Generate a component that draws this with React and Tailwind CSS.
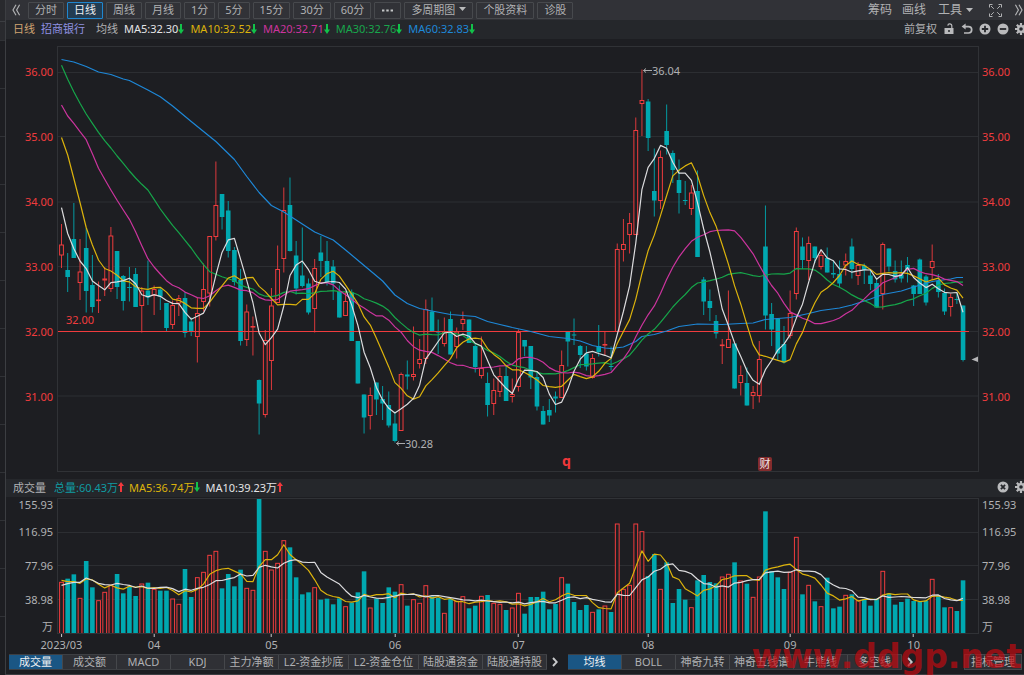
import React from "react";

const STEP = 6.175;
const FIRST = 61.5;
const LEFT = 57;
const WIDTH = 922;
const xAt = (i) => FIRST + STEP * i;
const pct = (x) => `${((x - LEFT) / WIDTH) * 100}%`;

// direction, high, body top, body bottom, low (chart units)
const CANDLES = `u 224 245 255 268|d 253 270 277 292|d 203 239 258 258|u 239 272 282.5 300|d 228 248 291 312.5|d 255 285 307 312.5|u 281.5 300 300 313|u 267 279 280 296|u 227 236 288.5 292|d 251 251 287 299|d 275 276 301 310.5|d 267 287 288 301.5|d 268 274 307 307|u 287 291 305.5 332.5|d 260.5 290.5 297.5 305|u 285.5 289.5 295.5 315|d 288 289.5 296.5 310|d 303 303 328 331|u 300.5 305.5 324.5 329|u 295 298.5 303 316|d 292 298 333 337.5|d 317.5 321.5 331 336|u 297.5 313.5 336.5 362.5|u 263.5 289.5 301.5 311.5|u 236 236.5 293 306.5|u 161.5 205.5 236.5 240.5|d 194 194 217 229.5|d 201 210.5 251 257.5|d 247 250 282 285.5|d 269 280 341 345.5|u 304.5 312 339.5 346|u 316.5 326.5 327 355.5|d 379.5 380 403.5 434.5|u 330 340.5 414.5 417.5|u 288 306 360.5 390|u 245.5 269.5 302.5 303|u 187.5 210.5 258.5 272.5|d 177.5 205 251 251.5|d 241 255.5 288.5 294.5|d 227.5 275.5 286 287.5|d 278.5 283.5 312.5 314.5|u 259 268.5 308.5 332.5|d 236 252.5 261 277|d 241 261 282 285.5|d 260 266.5 283.5 300|d 285.5 291 317.5 317.5|u 291.5 301.5 315.5 315.5|d 289.5 292.5 341 341|d 341 341 383.5 383.5|d 394.5 394.5 417.5 433.5|u 387.5 395.5 415.5 429.5|d 382.5 382.5 399.5 415|d 386 399 403.5 420|d 391.5 405 425.5 427.5|d 411.5 423.5 441 442.5|u 372.5 374.5 430.5 430.5|d 360.5 374.5 376.5 389.5|u 326.5 374.5 376.5 380.5|u 339 359.5 363.5 368.5|u 299.5 309.5 358.5 364|d 297.5 311.5 331.5 331.5|d 319.5 331.5 332.5 354|u 317.5 332 343.5 346.5|d 311.5 319 354.5 354.5|u 327.5 332 346.5 358.5|u 311.5 319.5 323.5 330|d 319.5 319.5 343 343|d 344 346 367 372.5|u 336.5 368.5 375.5 378.5|d 372.5 383 405 416.5|u 378.5 390.5 403.5 415|u 367.5 376.5 391.5 397|d 365.5 376 401 401|u 378.5 394.5 396.5 402.5|u 329.5 332.5 386.5 391.5|d 340 340 346.5 356|d 346 346 377.5 389|d 371.5 377 406.5 410.5|d 406 411 424.5 424.5|d 399 410 415.5 422|d 391.5 396.5 398.5 412.5|u 350.5 365.5 397.5 397.5|d 331.5 331.5 341.5 366.5|d 318.5 334.5 335.5 345|d 345 346 355 368|d 346 353.5 366.5 370.5|u 354 358.5 377.5 378.5|d 325 346 352 356.5|u 331.5 344.5 345 355|d 346.5 366 367 370.5|u 243.5 249.5 331.5 331.5|u 219 244.5 249.5 261.5|u 213 223.5 234.5 253.5|u 117.5 130.5 234.5 235|u 69.5 100.5 103.5 136|d 99 101.5 138 151|d 148.5 191 200.5 216.5|u 150.5 157.5 200.5 209|d 104.5 131 145 154.5|d 150.5 153 170 183|d 159.5 180 193 213.5|d 181 200 200.5 205|u 185 193 208.5 215|d 170.5 191 257 257|d 277 279.5 301.5 315|d 289.5 301 308 321|d 315 321 333.5 338.5|u 339 345 345.5 364|u 290.5 339.5 347.5 347.5|d 343.5 343.5 388.5 388.5|u 365.5 375.5 382.5 395.5|d 367.5 383 405.5 405.5|u 386 392.5 395.5 409|u 341 359.5 395.5 402.5|d 205.5 246.5 315.5 329.5|d 303 314 329.5 346|d 318.5 318.5 353.5 360|d 326 344 362.5 363.5|u 290.5 313.5 335.5 338.5|u 227.5 231.5 293.5 299.5|d 237.5 246.5 260 269|u 236.5 243.5 260.5 280|d 246.5 246.5 258 263|u 251 255.5 266.5 269.5|d 247.5 258 272.5 272.5|d 260.5 273 274.5 278|d 260.5 274 283.5 287.5|u 253.5 261.5 265 275.5|d 238.5 246.5 269 278.5|u 262 265.5 275.5 285|d 263.5 265.5 270 284|d 270 275.5 284 290|d 278.5 283 307.5 307.5|u 242.5 244.5 293.5 309.5|d 248.5 248.5 266.5 271.5|d 260.5 271 279.5 282.5|d 260.5 274.5 278.5 282.5|d 257 265 269 282.5|d 285 285.5 294 306|d 258.5 259.5 294 294|d 275 276.5 302.5 305.5|u 244.5 261.5 267.5 280|d 274 281 292 297.5|d 288.5 293 311.5 315|u 293.5 297.5 306.5 316.5|d 293.5 299 300 304|d 305.5 305.5 360 361.5`
  .split("|")
  .map((row) => {
    const [dir, ...n] = row.split(" ");
    const [high, top, bottom, low] = n.map(Number);
    return { up: dir === "u", high, top, bottom, low };
  });

// upper edge of each volume bar, in thirds of a unit below 475
const VOLUMES = [
  322, 311, 298, 370, 258, 337, 377, 352, 331, 297, 355, 334, 363, 327, 323, 343, 347, 347, 372, 388, 282, 366, 308, 292,
  241, 229, 340, 297, 334, 284, 340, 346, 70, 229, 285, 265, 197, 217, 307, 358, 352, 338, 374, 371, 388, 370, 395, 383,
  352, 289, 399, 371, 384, 337, 350, 329, 392, 374, 385, 332, 364, 369, 415, 372, 379, 365, 400, 392, 364, 360, 385, 388,
  405, 399, 355, 416, 366, 366, 350, 403, 387, 308, 326, 381, 405, 390, 412, 403, 393, 411, 147, 343, 331, 147, 170, 303,
  237, 343, 262, 384, 342, 374, 398, 316, 300, 321, 325, 306, 298, 262, 318, 326, 367, 306, 109, 288, 307, 342, 292, 187,
  358, 331, 379, 395, 308, 400, 395, 361, 358, 377, 373, 392, 371, 289, 355, 389, 381, 371, 378, 381, 377, 313, 363, 397,
  398, 408, 316,
].map((v) => 475 + v / 3);

const CLOSES = CANDLES.map((c) => (c.up ? c.top : c.bottom));

function average(values, period, lead) {
  return values.map((_, i) => {
    if (i < lead.length) return lead[i];
    const part = values.slice(i - period + 1, i + 1);
    return part.reduce((a, b) => a + b, 0) / period;
  });
}
const toPoints = (values) => values.map((y, i) => `${xAt(i).toFixed(1)},${y.toFixed(1)}`).join(" ");
const price = (list) => list.map((v) => 40 + v / 3);
const volume = (list) => list.map((v) => 475 + v / 3);

const MA5 = toPoints(average(CLOSES, 5, [207.7, 233.5, 248.5, 261]));
const MA10 = toPoints(average(CLOSES, 10, [137.5, 155, 178.5, 202.5, 227.5, 245, 260, 268.5, 271]));
const MA20 = toPoints(
  average(CLOSES, 20, price([195, 228, 250, 275, 299, 341, 385, 418, 450, 481, 510, 538, 575, 617, 656, 681, 702, 722, 736]))
);
const MA30 = toPoints(
  average(
    CLOSES,
    30,
    price([
      76, 118, 155, 190, 222, 250, 277, 302, 324, 348, 370, 393, 414, 433, 450, 478, 507, 532, 556, 578, 601, 624, 650, 674,
      695, 703, 710, 716, 722,
    ])
  )
);
const MA60 = [
  [0, 59.5], [2, 62], [4, 66.5], [6, 72], [8, 74.5], [10, 79], [11, 80.5], [14, 90], [16, 96.7], [18, 106], [21, 121.5],
  [25, 141.5], [28, 159.5], [30, 176.5], [32, 192.5], [34, 205.5], [36, 212], [39, 224], [41, 232], [44, 240], [46, 250],
  [49, 265.5], [52, 281], [54, 295], [56, 303.5], [58, 308.5], [60, 311], [63, 314.5], [67, 316.5], [69, 321.5],
  [71, 324.5], [73, 327.5], [76, 331.5], [79, 336.5], [82, 338.5], [84, 341], [86, 345.5], [88, 348], [89, 348.5],
  [91, 347], [93, 341.5], [94, 336.5], [96, 334.5], [98, 331], [100, 326.5], [103, 324], [107, 324.5], [110, 323.5],
  [112, 323], [114, 319.5], [116, 318.5], [118, 317.5], [121, 313.5], [123, 310.5], [126, 308], [128, 305], [131, 299],
  [133, 294.5], [136, 291], [138, 287], [141, 281.5], [142, 280.5], [144, 279], [145, 277.5], [146, 277.5],
]
  .map(([i, y]) => `${xAt(i).toFixed(1)},${y}`)
  .join(" ");
const VMA5 = toPoints(average(VOLUMES, 5, volume([316, 320, 320, 325])));
const VMA10 = toPoints(average(VOLUMES, 10, volume([331, 326, 322, 322, 309, 316, 325, 329, 330])));

const RED = "#f03c3e";
const TEAL = "#00a8b0";

function Bar({ x, top, bottom, up }) {
  return up ? (
    <rect x={x - 1.9} y={top} width={3.8} height={Math.max(bottom - top, 0.6)} fill="#1d1e22" stroke={RED} />
  ) : (
    <rect x={x - 2.3} y={top} width={4.6} height={Math.max(bottom - top, 1)} fill={TEAL} />
  );
}

function Line({ points, color }) {
  return <polyline points={points} fill="none" stroke={color} strokeWidth="1.2" strokeLinejoin="round" />;
}

function PriceChart() {
  return (
    <svg className="block h-full w-full" viewBox="57 46 922 426" preserveAspectRatio="none" role="img" aria-label="日线">
      {[72.5, 136.5, 202, 266.5, 331.5, 396].map((y) => (
        <line key={y} x1="57" x2="979" y1={y} y2={y} stroke="#2c2e32" />
      ))}
      {CANDLES.map((c, i) => (
        <g key={i}>
          <line x1={xAt(i)} x2={xAt(i)} y1={c.high} y2={c.low} stroke={c.up ? RED : TEAL} strokeWidth="0.9" />
          <Bar x={xAt(i)} top={c.top} bottom={c.bottom} up={c.up} />
        </g>
      ))}
      <line x1="57" x2="969" y1="331.5" y2="331.5" stroke={RED} />
      <Line points={MA60} color="#1e88d8" />
      <Line points={MA30} color="#16a64a" />
      <Line points={MA20} color="#cc349e" />
      <Line points={MA10} color="#dcb30c" />
      <Line points={MA5} color="#dcdcde" />
      <path d="M971.5 359.5L978 356.5V362Z" fill="#b5b5b7" />
    </svg>
  );
}

function VolumeChart() {
  return (
    <svg className="block h-full w-full" viewBox="57 498 922 136" preserveAspectRatio="none" role="img" aria-label="成交量">
      {[532.5, 565.5, 599.5].map((y) => (
        <line key={y} x1="57" x2="979" y1={y} y2={y} stroke="#2c2e32" />
      ))}
      {VOLUMES.map((y, i) => (
        <Bar key={i} x={xAt(i)} top={y} bottom={CANDLES[i].up ? 633.5 : 634} up={CANDLES[i].up} />
      ))}
      <Line points={VMA5} color="#dcb30c" />
      <Line points={VMA10} color="#dcdcde" />
    </svg>
  );
}

function Trend({ up }) {
  return (
    <svg className="h-[10px] w-[6px] shrink-0" viewBox="0 0 6 10" aria-hidden="true">
      {up ? <path d="M3 0L6 4H4V10H2V4H0Z" fill="#f2383c" /> : <path d="M3 10L6 5.6H4V0H2V5.6H0Z" fill="#12c24a" />}
    </svg>
  );
}

function Reading({ color, text, up }) {
  return (
    <span className={`flex items-center ${color}`}>
      {text}
      <Trend up={up} />
    </span>
  );
}

function Gear() {
  return (
    <svg className="block h-3 w-3" viewBox="0 0 12 12" aria-hidden="true">
      <g stroke="#b9babc" strokeWidth="2.2">
        <path d="M6 0V12M0 6H12M1.8 1.8L10.2 10.2M10.2 1.8L1.8 10.2" />
      </g>
      <circle cx="6" cy="6" r="4" fill="#b9babc" />
      <circle cx="6" cy="6" r="1.8" fill="#25272b" />
    </svg>
  );
}

function Disc({ d }) {
  return (
    <svg className="block h-3 w-3" viewBox="0 0 12 12" aria-hidden="true">
      <circle cx="6" cy="6" r="5.5" fill="#b9babc" />
      <path d={d} stroke="#25272b" strokeWidth="1.8" />
    </svg>
  );
}

function Caret() {
  return (
    <svg className="h-1 w-[7px] shrink-0" viewBox="0 0 7 4" aria-hidden="true">
      <path d="M0 0H7L3.5 4Z" fill="#b9babc" />
    </svg>
  );
}

function Chevrons({ left }) {
  return (
    <svg className="block h-3 w-[9px]" viewBox="0 0 9 12" aria-hidden="true">
      <path
        d={left ? "M4 0.8L1 6L4 11.2M7.6 0.8L4.6 6L7.6 11.2" : "M1.4 0.8L4.4 6L1.4 11.2M5 0.8L8 6L5 11.2"}
        fill="none"
        stroke="#b0b1b3"
        strokeWidth="1.2"
      />
    </svg>
  );
}

const PERIODS = ["分时", "日线", "周线", "月线", "1分", "5分", "15分", "30分", "60分"];
const box = "flex h-[17px] items-center rounded-[1px] border border-[#47494d] px-1.5 pb-0.5";

function Toolbar() {
  return (
    <div className="flex h-5 items-center overflow-hidden bg-[#313237] whitespace-nowrap">
      <button className="mr-[7px] ml-[6px] shrink-0" aria-label="后退">
        <Chevrons left />
      </button>
      <div className="flex gap-[3px]">
        {PERIODS.map((p) => (
          <button
            key={p}
            className={
              p === "日线"
                ? "flex h-[17px] items-center rounded-[1px] border border-[#1f86cf] bg-[#223c52] px-1.5 pb-0.5 text-[#f0f0f2]"
                : box
            }
          >
            {p}
          </button>
        ))}
        <button className="flex h-[17px] w-[27px] items-center justify-center rounded-[1px] border border-[#47494d]" aria-label="更多周期">
          <svg className="h-[3px] w-[11px]" viewBox="0 0 11 3" aria-hidden="true">
            <path d="M0 0.4H2.4V2.6H0ZM4.3 0.4H6.7V2.6H4.3ZM8.6 0.4H11V2.6H8.6Z" fill="#c4c5c7" />
          </svg>
        </button>
        <label className={box}>
          <select aria-label="多周期图" className="w-12 appearance-none bg-transparent text-[11px] leading-[15px] outline-none">
            <option>多周期图</option>
          </select>
          <Caret />
        </label>
        <button className={box}>个股资料</button>
        <button className={box}>诊股</button>
      </div>
      <div className="mr-px ml-auto flex shrink-0 items-center text-xs leading-4">
        <button className="mr-[10px]">筹码</button>
        <button className="mr-3">画线</button>
        <button className="mr-4 flex items-center gap-1">
          工具
          <Caret />
        </button>
        <button className="mr-3" aria-label="全屏">
          <svg className="block h-[13px] w-[13px]" viewBox="0 0 13 13" fill="none" stroke="#b0b1b3" aria-hidden="true">
            <path d="M0.5 3.5V0.5H3.5M2 2L4.8 4.8M9.5 0.5H12.5V3.5M11 2L8.2 4.8M0.5 9.5V12.5H3.5M2 11L4.8 8.2M9.5 12.5H12.5V9.5M11 11L8.2 8.2" />
          </svg>
        </button>
        <button aria-label="前进">
          <Chevrons />
        </button>
      </div>
    </div>
  );
}

function InfoBar() {
  return (
    <div className="flex h-[19px] items-center overflow-hidden bg-[#25272b] pb-0.5 pl-[7px] whitespace-nowrap">
      <span className="text-[#d0a472]">日线</span>
      <span className="ml-1.5 text-[#8f91e2]">招商银行</span>
      <span className="ml-[11px]">均线</span>
      <div className="ml-1.5 flex gap-1.5">
        <Reading color="text-[#e4e4e6]" text="MA5:32.30" />
        <Reading color="text-[#dcb30c]" text="MA10:32.52" />
        <Reading color="text-[#cc349e]" text="MA20:32.71" />
        <Reading color="text-[#18a64c]" text="MA30:32.76" />
        <Reading color="text-[#1e88d8]" text="MA60:32.83" />
      </div>
      <div className="-mr-[3px] ml-auto flex shrink-0 items-center gap-[6px]">
        <button>前复权</button>
        <button aria-label="锁定">
          <svg className="block h-3 w-3" viewBox="0 0 12 12" aria-hidden="true">
            <path d="M1.5 5H10.5V11H1.5Z" fill="#b9babc" />
            <path d="M8.8 5V3A2 2 0 0 0 4.8 2.6" fill="none" stroke="#b9babc" strokeWidth="1.2" />
            <circle cx="6" cy="8" r="1" fill="#25272b" />
          </svg>
        </button>
        <button aria-label="撤销">
          <svg className="block h-3 w-3" viewBox="0 0 12 12" aria-hidden="true">
            <path d="M3 3.6H7.5A3.2 3.2 0 0 1 7.5 10H3" fill="none" stroke="#b9babc" strokeWidth="1.7" />
            <path d="M0.6 3.6L4.6 0.6V6.6Z" fill="#b9babc" />
          </svg>
        </button>
        <button aria-label="放大">
          <Disc d="M6 2.8V9.2M2.8 6H9.2" />
        </button>
        <button aria-label="缩小">
          <Disc d="M2.8 6H9.2" />
        </button>
        <button aria-label="设置">
          <Gear />
        </button>
      </div>
    </div>
  );
}

const PRICES = ["36.00", "35.00", "34.00", "33.00", "32.00", "31.00"];

function PriceAxis({ side }) {
  return (
    <div className={side === "left" ? "w-[51px] shrink-0 pr-1 text-right" : "w-[45px] shrink-0 pl-[3px]"}>
      {PRICES.map((p) => (
        <div key={p} className="h-[65px] pt-[18px] text-[#f03c3e]">
          {p}
        </div>
      ))}
    </div>
  );
}

function VolumeAxis({ side }) {
  return (
    <div className={side === "left" ? "-mt-px w-[51px] shrink-0 pr-1 text-right" : "-mt-px w-[45px] shrink-0 pl-[3px]"}>
      <div className="h-[27px]">155.93</div>
      <div className="h-[34px]">116.95</div>
      <div className="h-[34px]">77.96</div>
      <div className="h-[27px]">38.98</div>
      <div>万</div>
    </div>
  );
}

const MONTHS = [
  [0, "2023/03"],
  [15, "04"],
  [34, "05"],
  [54, "06"],
  [74, "07"],
  [95, "08"],
  [118, "09"],
  [138, "10"],
];

function Callout({ x, top, text }) {
  return (
    <span className={`absolute flex items-center ${top}`} style={{ left: pct(x) }}>
      <svg className="h-[5px] w-[9px]" viewBox="0 0 9 5" aria-hidden="true">
        <path d="M0.5 2.5H9M3 0.5L0.5 2.5L3 4.5" fill="none" stroke="#a9aaac" />
      </svg>
      {text}
    </span>
  );
}

function Tabs({ items, active }) {
  return (
    <div className="flex h-4 shrink-0 border-y border-[#3d3f43]">
      {items.map(([name, width]) => (
        <button
          key={name}
          className={`flex items-center justify-center border-r border-[#45474b] pb-0.5 ${width} ${
            name === active ? "bg-[#1a5684] text-[#f0f0f2]" : "bg-[#2f3035]"
          }`}
        >
          {name}
        </button>
      ))}
    </div>
  );
}

function More() {
  return (
    <button aria-label="更多">
      <svg className="block h-[10px] w-[6px]" viewBox="0 0 6 10" aria-hidden="true">
        <path d="M1 1L4.8 5L1 9" fill="none" stroke="#c8c9cb" strokeWidth="1.9" />
      </svg>
    </button>
  );
}

const SUB_TABS = [
  ["成交量", "w-[54px]"],
  ["成交额", "w-[54px]"],
  ["MACD", "w-[54px]"],
  ["KDJ", "w-[54px]"],
  ["主力净额", "w-[54px]"],
  ["L2-资金抄底", "w-[70px]"],
  ["L2-资金仓位", "w-[70px]"],
  ["陆股通资金", "w-16"],
  ["陆股通持股", "w-16"],
];
const MAIN_TABS = [
  ["均线", "w-[54px]"],
  ["BOLL", "w-[54px]"],
  ["神奇九转", "w-[54px]"],
  ["神奇五线谱", "w-16"],
  ["牛熊线", "w-[54px]"],
  ["多空线", "w-[54px]"],
];

export default function App() {
  return (
    <div className="flex min-h-screen overflow-hidden bg-[#1d1e22] font-['Noto_Sans','Noto_Sans_CJK_SC',sans-serif] text-[11px] leading-[15px] text-[#b0b1b3]">
      <div className="w-[6px] shrink-0 border-r border-[#3c3e42] bg-[#1d1e22]">
        <div className="h-[22px] border-b border-[#3c3e42] bg-[#292a2e]" />
        <div className="h-[18px] bg-[#292a2e]" />
        {Array.from({ length: 13 }, (_, i) => (
          <div key={i} className="h-12 border-t border-[#303236]" />
        ))}
      </div>

      <main className="min-w-0 flex-1">
        <Toolbar />
        <InfoBar />

        <section className="flex h-[440px] pt-[7px]">
          <PriceAxis side="left" />
          <div className="relative h-[426px] min-w-0 flex-1">
            <PriceChart />
            <div className="pointer-events-none absolute inset-0 border border-[#303236]" />
            <Callout x={643} top="top-[17px]" text="36.04" />
            <Callout x={396} top="top-[390px]" text="30.28" />
            <span className="absolute top-[266px] text-[#f03c3e]" style={{ left: pct(66) }}>
              32.00
            </span>
            <span className="absolute top-[405px] text-sm leading-5 font-bold text-[#f0383b]" style={{ left: pct(562) }}>
              q
            </span>
            <span
              className="absolute top-[411px] flex h-[14px] w-[14px] items-center justify-center rounded-[2px] bg-[#842c2d] pb-px text-[#f0e4e4]"
              style={{ left: pct(758) }}
            >
              财
            </span>
          </div>
          <PriceAxis side="right" />
        </section>

        <section>
          <div className="flex h-[18px] items-center overflow-hidden bg-[#25272b] pb-0.5 pl-[7px] whitespace-nowrap">
            <span>成交量</span>
            <div className="ml-2 flex gap-[5px]">
              <Reading color="text-[#109ca2]" text="总量:60.43万" up />
              <Reading color="text-[#dcb30c]" text="MA5:36.74万" />
              <Reading color="text-[#e4e4e6]" text="MA10:39.23万" up />
            </div>
            <div className="-mr-[3px] ml-auto flex shrink-0 items-center gap-[6px]">
              <button aria-label="关闭">
                <Disc d="M3.9 3.9L8.1 8.1M8.1 3.9L3.9 8.1" />
              </button>
              <button aria-label="设置">
                <Gear />
              </button>
            </div>
          </div>
          <div className="flex pt-px">
            <VolumeAxis side="left" />
            <div className="relative h-[136px] min-w-0 flex-1">
              <VolumeChart />
              <div className="pointer-events-none absolute inset-0 border border-[#303236]" />
              {MONTHS.map(([i, label]) => (
                <div
                  key={label}
                  className="absolute top-full flex -translate-x-1/2 flex-col items-center"
                  style={{ left: pct(xAt(i)) }}
                >
                  <span className="h-[3px] w-px bg-[#c8c9cb]" />
                  <span>{label}</span>
                </div>
              ))}
            </div>
            <VolumeAxis side="right" />
          </div>
        </section>

        <nav className="relative mt-5 flex h-4 items-center pl-[3px] whitespace-nowrap">
          <Tabs items={SUB_TABS} active="成交量" />
          <div className="mr-[10px] ml-[5px]">
            <More />
          </div>
          <Tabs items={MAIN_TABS} active="均线" />
          <div className="ml-[5px]">
            <More />
          </div>
          <button className="mr-0.5 ml-auto flex h-4 items-center border border-[#45474b] bg-[#2f3035] px-1.5 pb-0.5">指标管理</button>
          <span className="pointer-events-none absolute right-0.5 -bottom-[7px] font-['DejaVu_Sans',sans-serif] text-[33px] leading-10 font-bold text-[#c40a10]/70">
            www.ddgp.net
          </span>
        </nav>
        <div className="mt-1 h-px bg-[#3c3e42]" />
      </main>
    </div>
  );
}
